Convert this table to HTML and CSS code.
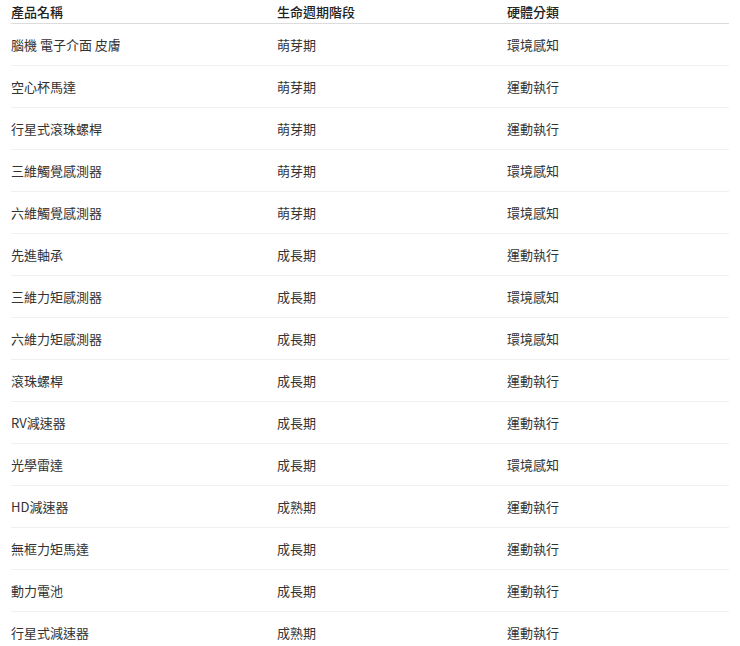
FILE: index.html
```html
<!DOCTYPE html>
<html lang="zh-Hant">
<head>
<meta charset="utf-8">
<title>產品列表</title>
<link rel="stylesheet" href="styles.css">
</head>
<body>
<div class="wrap">
<table class="products">
<colgroup>
<col class="c1"><col class="c2"><col class="c3">
</colgroup>
<thead>
<tr><th>產品名稱</th><th>生命週期階段</th><th>硬體分類</th></tr>
</thead>
<tbody>
<tr><td>腦機 電子介面 皮膚</td><td>萌芽期</td><td>環境感知</td></tr>
<tr><td>空心杯馬達</td><td>萌芽期</td><td>運動執行</td></tr>
<tr><td>行星式滾珠螺桿</td><td>萌芽期</td><td>運動執行</td></tr>
<tr><td>三維觸覺感測器</td><td>萌芽期</td><td>環境感知</td></tr>
<tr><td>六維觸覺感測器</td><td>萌芽期</td><td>環境感知</td></tr>
<tr><td>先進軸承</td><td>成長期</td><td>運動執行</td></tr>
<tr><td>三維力矩感測器</td><td>成長期</td><td>環境感知</td></tr>
<tr><td>六維力矩感測器</td><td>成長期</td><td>環境感知</td></tr>
<tr><td>滾珠螺桿</td><td>成長期</td><td>運動執行</td></tr>
<tr><td>RV減速器</td><td>成長期</td><td>運動執行</td></tr>
<tr><td>光學雷達</td><td>成長期</td><td>環境感知</td></tr>
<tr><td>HD減速器</td><td>成熟期</td><td>運動執行</td></tr>
<tr><td>無框力矩馬達</td><td>成長期</td><td>運動執行</td></tr>
<tr><td>動力電池</td><td>成長期</td><td>運動執行</td></tr>
<tr><td>行星式減速器</td><td>成熟期</td><td>運動執行</td></tr>
</tbody>
</table>
</div>
</body>
</html>
```

FILE: styles.css
```css
html, body {
  margin: 0;
  padding: 0;
  background: #fff;
}
body {
  font-family: "Noto Sans CJK TC", "Noto Sans", "Liberation Sans", sans-serif;
  font-size: 13px;
  color: #333;
}
.wrap {
  padding: 0 11px;
}
.products {
  width: 100%;
  border-collapse: collapse;
  table-layout: fixed;
}
.products .c1 { width: 266px; }
.products .c2 { width: 230px; }
.products th {
  text-align: left;
  font-weight: 500;
  color: #222;
  height: 20px;
  padding: 3px 0 0 0;
  line-height: 18px;
  vertical-align: top;
  border-bottom: 1px solid #dcdcdc;
}
.products td {
  height: 41px;
  padding: 0;
  line-height: 18px;
  vertical-align: middle;
  border-bottom: 1px solid #f0f0f0;
}
```
